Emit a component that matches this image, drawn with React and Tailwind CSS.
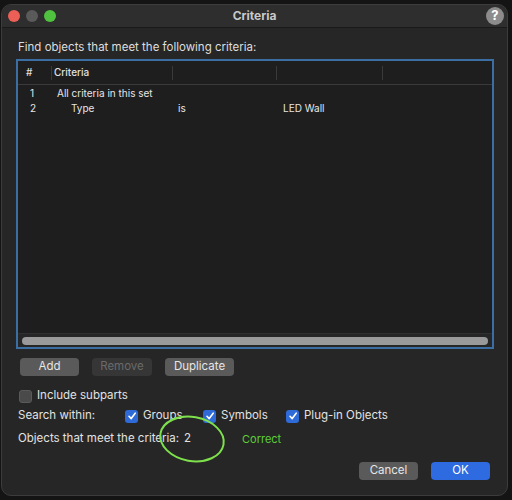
import React from 'react';

const Check = () => (
  <svg width="10" height="10" viewBox="0 0 10 10" fill="none">
    <path d="M2 5.3 L4.2 7.6 L8.2 2.2" stroke="white" strokeWidth="1.6" strokeLinecap="round" strokeLinejoin="round" />
  </svg>
);

const CheckBox = ({ checked }) => (
  <span
    className={
      checked
        ? 'w-[13px] h-[13px] rounded-[3px] bg-[#2f6bd8] flex items-center justify-center shrink-0'
        : 'w-[13px] h-[13px] rounded-[3px] bg-[#4a4a4a] border border-[#5a5a5a] shrink-0'
    }
  >
    {checked && <Check />}
  </span>
);

const Btn = ({ children, disabled, primary, className = '' }) => (
  <button
    className={
      'h-[18px] rounded-[4px] text-[11.5px] leading-none flex items-center justify-center ' +
      (primary
        ? 'bg-[#2e6ae0] text-white '
        : disabled
        ? 'bg-[#363636] text-[#6a6a6a] '
        : 'bg-[#5a5a5a] text-[#e6e6e6] ') +
      className
    }
  >
    {children}
  </button>
);

export default function App() {
  return (
    <div
      className="w-[512px] h-[500px] bg-[#141414] pt-[4px] pl-[1px]"
      style={{ fontFamily: 'Inter, "Liberation Sans", sans-serif' }}
    >
      <div className="relative w-[507px] h-[492px] rounded-[10px] border border-[#3c3c3c] bg-[#262626] overflow-hidden flex flex-col">
        {/* title bar */}
        <div className="h-[23px] bg-[#2e2e2e] border-b border-[#1a1a1a] flex items-center pl-[6px] pr-[3px] relative shrink-0">
          <div className="flex gap-[6px]">
            <span className="w-[12px] h-[12px] rounded-full bg-[#ec5f57]" />
            <span className="w-[12px] h-[12px] rounded-full bg-[#5a5a5a]" />
            <span className="w-[12px] h-[12px] rounded-full bg-[#4fc33f]" />
          </div>
          <div className="absolute inset-0 flex items-center justify-center text-[12px] font-bold text-[#c9c9c9]">
            Criteria
          </div>
          <div className="ml-auto w-[18px] h-[18px] rounded-full bg-[#8c8c8c] text-white text-[13px] font-bold flex items-center justify-center relative">
            ?
          </div>
        </div>

        <div className="flex flex-col px-[14px] pt-[11px]">
          <div className="text-[11.5px] leading-[16px] text-[#dedede] pl-[2px]">Find objects that meet the following criteria:</div>

          {/* table */}
          <div className="mt-[4px] w-[478px] h-[290px] border-2 border-[#3b6ea3] bg-[#1e1e1e] flex flex-col">
            <div className="h-[24px] border-b border-[#3a3a3a] flex items-center text-[10px] text-[#e0e0e0] font-medium">
              <div className="w-[33px] pl-[8px]">#</div>
              <div className="w-[121px] h-[14px] border-l border-[#3a3a3a] pl-[2px] flex items-center">Criteria</div>
              <div className="w-[104px] h-[14px] border-l border-[#3a3a3a]" />
              <div className="w-[106px] h-[14px] border-l border-[#3a3a3a]" />
              <div className="h-[14px] border-l border-[#3a3a3a]" />
            </div>
            <div className="flex-1 pt-[1px] text-[10px] text-[#e6e6e6]">
              <div className="h-[15px] flex items-center">
                <div className="w-[39px] pl-[12px]">1</div>
                <div>All criteria in this set</div>
              </div>
              <div className="h-[15px] flex items-center">
                <div className="w-[53px] pl-[12px]">2</div>
                <div className="w-[107px]">Type</div>
                <div className="w-[105px]">is</div>
                <div>LED Wall</div>
              </div>
            </div>
            <div className="h-[14px] bg-[#262626] border-t border-[#303030] px-[4px] flex items-center">
              <div className="w-full h-[8px] rounded-full bg-[#9a9a9a]" />
            </div>
          </div>

          {/* buttons */}
          <div className="flex gap-[13px] mt-[9px] pl-[4px]">
            <Btn className="w-[59px]">Add</Btn>
            <Btn className="w-[60px]" disabled>Remove</Btn>
            <Btn className="w-[69px]">Duplicate</Btn>
          </div>

          <div className="mt-[12px] h-[16px] flex items-center gap-[5px] pl-[3px] text-[11.5px] text-[#e2e2e2]">
            <CheckBox />
            <span>Include subparts</span>
          </div>

          <div className="mt-[4px] h-[16px] flex items-center pl-[2px] text-[11.5px] text-[#e2e2e2]">
            <span className="w-[107px]">Search within:</span>
            <CheckBox checked />
            <span className="ml-[5px] w-[60px]">Groups</span>
            <CheckBox checked />
            <span className="ml-[5px] w-[65px]">Symbols</span>
            <CheckBox checked />
            <span className="ml-[5px]">Plug-in Objects</span>
          </div>

          <div className="mt-[7px] h-[16px] flex items-center pl-[2px] text-[11.5px] text-[#e2e2e2]">
            <span className="w-[166px]">Objects that meet the criteria:</span>
            <span className="w-[58px]">2</span>
            <span className="text-[11px] text-[#5ccf35]">Correct</span>
          </div>

          <div className="mt-[15px] flex justify-end gap-[13px] pr-[3px]">
            <Btn className="w-[59px]">Cancel</Btn>
            <Btn className="w-[59px]" primary>OK</Btn>
          </div>
        </div>

        {/* annotation ellipse */}
        <svg className="absolute left-[153px] top-[408px]" width="74" height="52" viewBox="0 0 74 52">
          <ellipse cx="37" cy="26" rx="32" ry="22" transform="rotate(10 37 26)" fill="none" stroke="#7ee04c" strokeWidth="2" />
        </svg>
      </div>
    </div>
  );
}
